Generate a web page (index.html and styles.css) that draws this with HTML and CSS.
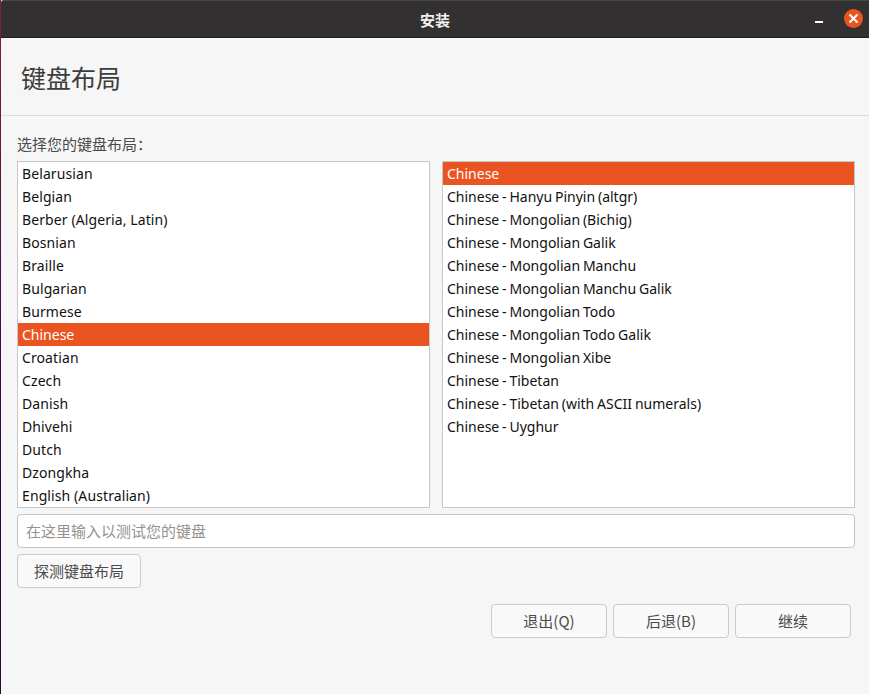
FILE: index.html
```html
<!DOCTYPE html>
<html lang="zh">
<head>
<meta charset="utf-8">
<title>安装</title>
<link rel="stylesheet" href="styles.css">
</head>
<body>
<div class="window">
  <header class="titlebar">
    <span class="title">安装</span>
    <span class="minimize"></span>
    <span class="close">
      <svg width="19" height="19" viewBox="0 0 19 19"><path d="M5.5 5.5l8 8M13.5 5.5l-8 8" stroke="#fff" stroke-width="2" fill="none"/></svg>
    </span>
  </header>
  <div class="heading"><h1>键盘布局</h1></div>
  <main class="content">
    <div class="label">选择您的键盘布局：</div>
    <div class="lists">
      <ul class="list list-layouts">
        <li>Belarusian</li>
        <li>Belgian</li>
        <li>Berber (Algeria, Latin)</li>
        <li>Bosnian</li>
        <li>Braille</li>
        <li>Bulgarian</li>
        <li>Burmese</li>
        <li class="selected">Chinese</li>
        <li>Croatian</li>
        <li>Czech</li>
        <li>Danish</li>
        <li>Dhivehi</li>
        <li>Dutch</li>
        <li>Dzongkha</li>
        <li>English (Australian)</li>
      </ul>
      <ul class="list list-variants">
        <li class="selected">Chinese</li>
        <li>Chinese - Hanyu Pinyin (altgr)</li>
        <li>Chinese - Mongolian (Bichig)</li>
        <li>Chinese - Mongolian Galik</li>
        <li>Chinese - Mongolian Manchu</li>
        <li>Chinese - Mongolian Manchu Galik</li>
        <li>Chinese - Mongolian Todo</li>
        <li>Chinese - Mongolian Todo Galik</li>
        <li>Chinese - Mongolian Xibe</li>
        <li>Chinese - Tibetan</li>
        <li>Chinese - Tibetan (with ASCII numerals)</li>
        <li>Chinese - Uyghur</li>
      </ul>
    </div>
    <input class="entry" type="text" placeholder="在这里输入以测试您的键盘">
    <div class="detect-row"><button class="btn detect">探测键盘布局</button></div>
    <div class="actions">
      <button class="btn action">退出(Q)</button>
      <button class="btn action">后退(B)</button>
      <button class="btn action">继续</button>
    </div>
  </main>
</div>
</body>
</html>
```
FILE: styles.css
```css
* { box-sizing: border-box; }
html, body { margin: 0; padding: 0; height: 100%; }
body {
  width: 869px;
  height: 694px;
  overflow: hidden;
  background: linear-gradient(180deg, #8a1f30 0%, #6a1540 20%, #48104a 40%, #2c0a3a 70%, #2a0a36 100%);
  font-family: "Noto Sans", "Noto Sans CJK SC", sans-serif;
  font-size: 14px;
}
.window {
  margin-left: 1px;
  height: 694px;
  background: #f6f6f6;
  display: flex;
  flex-direction: column;
}
.titlebar {
  height: 38px;
  flex: none;
  position: relative;
  display: flex;
  align-items: center;
  justify-content: center;
  background: #323030;
  border-top: 1px solid #4a4846;
  border-bottom: 1px solid #1f1e1e;
  border-top-left-radius: 3px;
}
.title {
  color: #f2f2f2;
  font-family: "Noto Sans CJK SC", sans-serif;
  font-size: 15px;
  font-weight: 700;
}
.minimize {
  position: absolute;
  left: 814px;
  top: 20px;
  width: 8px;
  height: 2px;
  background: #fff;
}
.close {
  position: absolute;
  left: 843px;
  top: 8px;
  width: 19px;
  height: 19px;
  border-radius: 50%;
  background: #e95420;
  display: flex;
  align-items: center;
  justify-content: center;
}
.heading {
  height: 78px;
  flex: none;
  padding-left: 20px;
  display: flex;
  align-items: center;
  border-bottom: 1px solid #dcdcdc;
}
h1 {
  margin: 0;
  font-family: "Noto Sans CJK SC", sans-serif;
  font-size: 25px;
  font-weight: 400;
  color: #3d3d3d;
}
.content {
  flex: 1;
  padding: 0 14px 0 16px;
  display: flex;
  flex-direction: column;
}
.label {
  height: 45px;
  padding-top: 18px;
  font-family: "Noto Sans CJK SC", sans-serif;
  font-size: 15px;
  line-height: 20px;
  color: #4a4a4a;
}
.lists {
  display: grid;
  grid-template-columns: 413px 413px;
  column-gap: 12px;
  height: 347px;
}
.list {
  list-style: none;
  margin: 0;
  padding: 0;
  background: #fff;
  border: 1px solid #c8c8c8;
  overflow: hidden;
}
.list li {
  height: 23px;
  line-height: 23px;
  padding-left: 4px;
  color: #111;
  white-space: nowrap;
}
.list-layouts li { letter-spacing: 0.1px; }
.list-variants li { word-spacing: -0.8px; }
.list li.selected {
  background: #e95420;
  color: #fff;
  letter-spacing: 0;
}
.entry {
  display: block;
  width: 838px;
  height: 34px;
  margin-top: 6px;
  padding: 0 8px 2px;
  background: #fff;
  border: 1px solid #c8c6c4;
  border-radius: 4px;
  font-family: "Noto Sans CJK SC", sans-serif;
  font-size: 15px;
  outline: none;
}
.entry::placeholder { color: #96918c; opacity: 1; }
.detect-row { margin-top: 6px; }
.btn {
  height: 34px;
  padding: 0 0 2px;
  background: #f9f9f9;
  border: 1px solid #cdcbc9;
  border-radius: 4px;
  font-family: "Noto Sans CJK SC", sans-serif;
  font-size: 15px;
  color: #4a4a4a;
}
.detect { width: 124px; }
.actions {
  display: flex;
  gap: 6px;
  margin-top: 16px;
  padding-left: 474px;
}
.action { width: 116px; }
```
